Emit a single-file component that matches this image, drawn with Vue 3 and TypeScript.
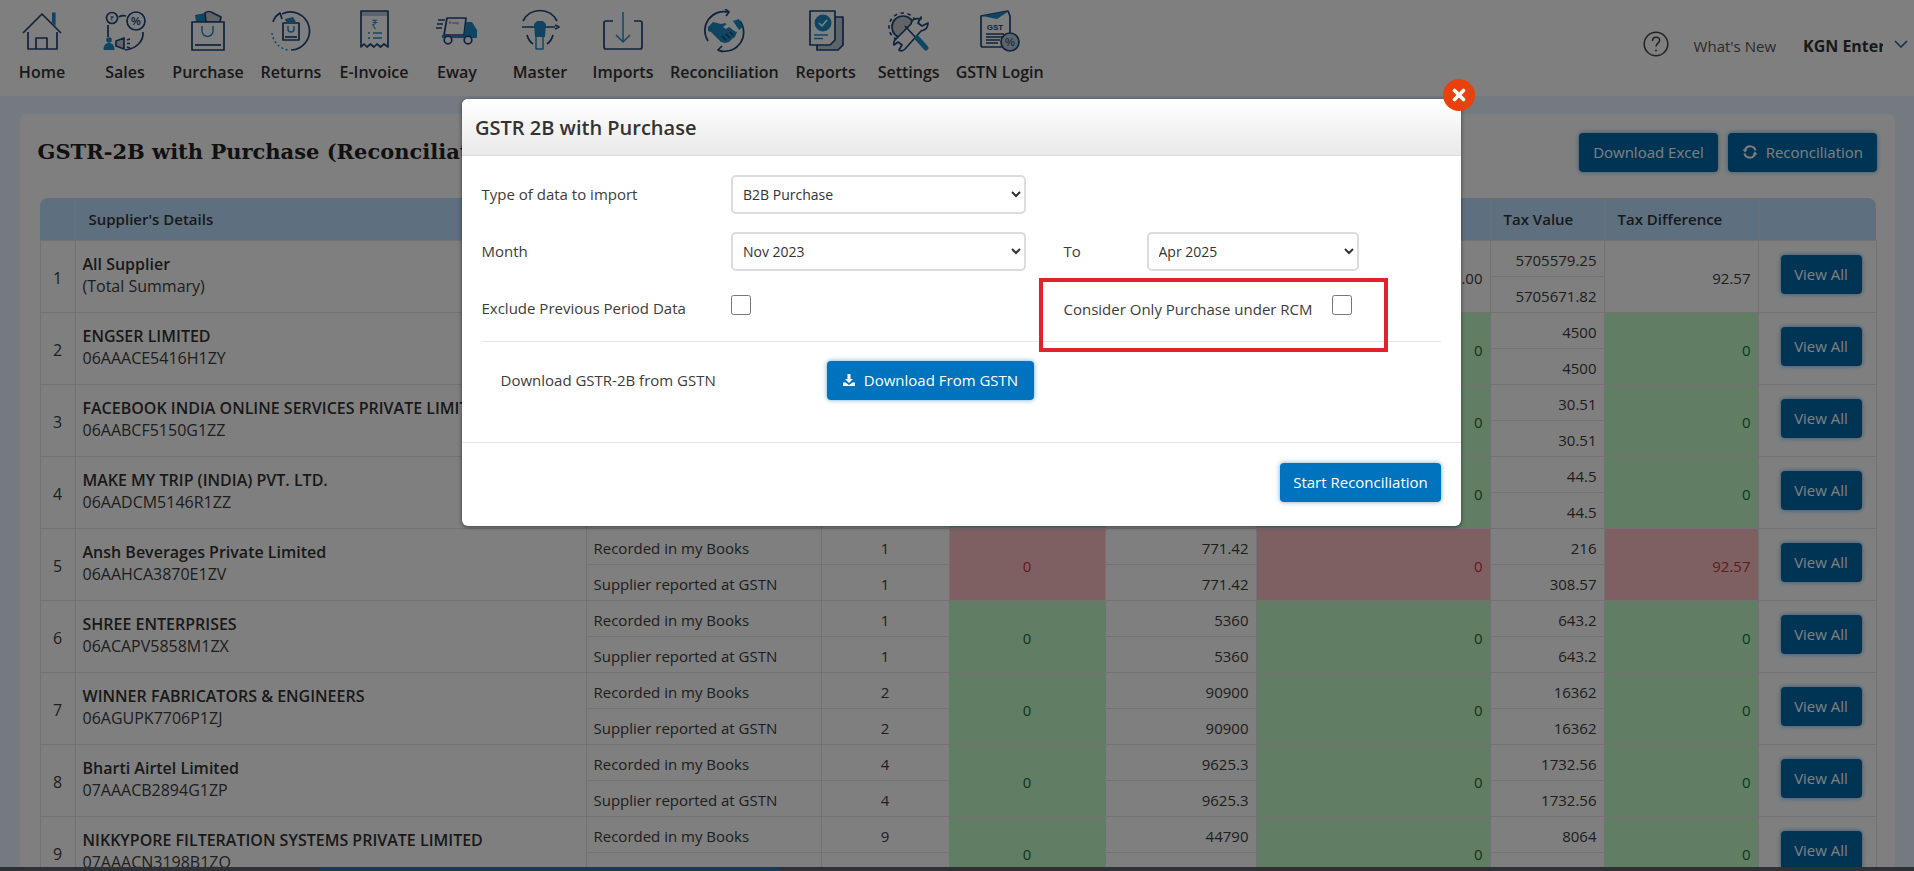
<template>
  <div class="page">
    <header class="topbar">
      <nav class="nav">
        <a v-for="item in navItems" :key="item.key" class="nav-item">
          <svg class="nav-icon" viewBox="0 0 48 44" width="48" height="44">
            <template v-if="item.key === 'home'">
              <path class="navy" stroke-width="3.600" d="M5 24 24 5l19 19" />
              <path class="blue" d="M34 3.500h3.600V17L34 13.500z" />
              <path class="navy" d="M10 23v17h29V23M18 40V29h11v11" />
            </template>
            <template v-else-if="item.key === 'sales'">
              <circle class="navy" cx="11" cy="9" r="5.500" />
              <text x="11" y="11.600" class="tiny" font-size="7">₹</text>
              <circle class="navy" stroke-width="2" cx="35" cy="12" r="9" />
              <text x="35" y="16" class="tiny bold" font-size="11">%</text>
              <path class="navy" d="M18 8q3-2 7-1M7 16v12M42 23c1 9-7 17-18 18" />
              <circle class="blue" cx="8" cy="31" r="2.800" />
              <path class="blue" d="M2.500 41c0-6 3-7 5.500-7s5.500 1 5.500 7z" />
              <path class="grey navy" d="M15 32l8-3v11l-8-3z" />
              <path class="navy" d="M26 31l3-1M26 34.500h3M26 38l3 1" />
            </template>
            <template v-else-if="item.key === 'purchase'">
              <path class="blue" d="M11 6l10-2 2 9H12z" />
              <path class="grey navy" d="M21 4q4-3 8 0l4 2 4 2-1 5H22z" />
              <path class="paper navy" d="M8 13h32v28H8z" />
              <path class="light" d="M18 17v5a5.500 5.500 0 0 0 11 0v-5" />
              <path class="navy" stroke-width="2.400" d="M11 36h26" />
            </template>
            <template v-else-if="item.key === 'returns'">
              <path class="navy" d="M15 5a19 19 0 1 1 9 36" />
              <path class="light" stroke-dasharray="2 2.500" d="M5 24a19 19 0 0 0 16 17" />
              <path class="navy" d="M8 8l5-4 2 6M13 4q-5 3-7 9" />
              <path class="blue" d="M18 10l8-2 3 5H19z" />
              <path class="paper navy" d="M16 14h16v17H16z" />
              <path class="light" d="M21 17v3a3 3 0 0 0 6 0v-3" />
              <path class="navy" d="M18 28h12" />
            </template>
            <template v-else-if="item.key === 'einvoice'">
              <path class="band" d="M11 2h27v5H11z" />
              <path class="navy" d="M11 38V2h27v36l-4-3-3.500 3-3.500-3-3 3-3.500-3-3.500 3-3-3z" />
              <text x="24.500" y="20" class="tiny light-text" font-size="13">₹</text>
              <path class="light" stroke-width="1.800" d="M18 24h2M23 24h9M18 29h2M23 29h9" />
            </template>
            <template v-else-if="item.key === 'eway'">
              <path class="paper navy" d="M14 9h19l-2 17H11z" />
              <text x="16" y="15" class="plain" font-size="3.500">E-way</text>
              <path class="navy" d="M5 11h7M4 15h6M3 19h6" />
              <path class="blue" d="M33 13h6l5 8v8H31z" />
              <path class="blue" d="M9 26h24v3H9z" />
              <circle class="paper navy" stroke-width="2.200" cx="15" cy="31" r="3.800" />
              <circle class="paper navy" stroke-width="2.200" cx="35" cy="31" r="3.800" />
            </template>
            <template v-else-if="item.key === 'master'">
              <path class="navy" d="M7 12a19 19 0 0 1 34 0M11 26a16 16 0 0 0 6 9M37 26a16 16 0 0 1-6 9" />
              <path class="navy" stroke-width="2.600" d="M6 18h33" />
              <path class="navy" d="M39 16l4 2-4 2" />
              <path class="blue" d="M18 15l3-3h6l3 3-1 13H19z" />
              <path class="light" d="M20 28v12h7V28" />
            </template>
            <template v-else-if="item.key === 'imports'">
              <path class="navy" stroke-width="1.800" d="M14 12H7a2 2 0 0 0-2 2v24a2 2 0 0 0 2 2h34a2 2 0 0 0 2-2V14a2 2 0 0 0-2-2h-6" />
              <path class="light" stroke-width="1.800" d="M24 3v30M17 26l7 7 7-7" />
            </template>
            <template v-else-if="item.key === 'recon'">
              <path class="navy" stroke-width="1.400" d="M8 32a19 19 0 0 1 20-29M40 12a19 19 0 0 1-22 29" />
              <path class="navy" stroke-width="1.400" d="M25 0l4 3-3 4M22 37l-4 4 5 2" />
              <path class="blue" d="M8 18l5-5 8 2 4-1 12 9-2 5-3 2-3 3-4 1-4-1-10-10-3-1z" />
              <path class="paper" d="M23 18l5-4 4 0 6 7-2 2-7-5-3 2z" />
              <path class="blue" d="M33 12l6-2 4 8-4 3z" />
              <path class="navy" stroke-width="1" d="M22 27l4 4M26 25l4 4M30 23l3 3" />
            </template>
            <template v-else-if="item.key === 'reports'">
              <path class="band navy" d="M19 8h22v28l-5 5H15V20z" />
              <path class="paper navy" d="M8 2h25v29l-5 5H8z" />
              <circle class="blue" cx="21" cy="14" r="8.500" />
              <path class="check" d="M17 14l3 3 5-6" />
              <path class="light" d="M12 26h14M12 29.500h9" />
            </template>
            <template v-else-if="item.key === 'settings'">
              <circle class="navy" stroke-width="4" stroke-dasharray="3.500 3.500" cx="18" cy="18" r="14" />
              <circle class="grey navy" cx="18" cy="18" r="11" />
              <path class="paper navy" stroke-width="1.500" d="M36 8l-3 6 4 3 6-3q0 7-7 8L20 40q-3 3-6 1l3-5-4-3-4 3q-1-4 2-6l15-15q1-7 10-5z" />
              <path class="navy" stroke-width="2.200" d="M20 17l12 13" />
              <path class="blue-line" stroke-width="5" d="M32 29l9 10" />
            </template>
            <template v-else>
              <path class="paper navy" d="M5 7l27-5 2 5v31H7a2 2 0 0 1-2-2z" />
              <path class="blue" d="M6 7l27-5-12 8z" />
              <text x="19" y="21" class="plain bold" font-size="8">GST</text>
              <path class="navy" d="M10 25h18M10 28h18M10 31h14M10 34h12" />
              <circle class="band navy" stroke-width="1.500" cx="34" cy="33" r="9" />
              <text x="34" y="37" class="tiny" font-size="11">%</text>
            </template>
          </svg>
          <span class="nav-label">{{ item.label }}</span>
        </a>
      </nav>

      <div class="account">
        <svg class="help" viewBox="0 0 26 26" width="26" height="26">
          <circle cx="13" cy="13" r="11.800" />
          <path d="M9.500 10c0-2.300 1.600-3.700 3.600-3.700 2.100 0 3.500 1.300 3.500 3 0 2.700-3.600 3-3.600 6.200" />
          <circle class="dot" cx="13" cy="19.500" r="1" />
        </svg>
        <span class="whats-new">What's New</span>
        <span class="company">KGN Enterprises</span>
        <svg class="chevron" viewBox="0 0 14 8" width="14" height="8"><path d="M1 1l6 6 6-6" /></svg>
      </div>
    </header>

    <main class="content">
      <section class="card">
        <div class="card-head">
          <h1>GSTR-2B with Purchase (Reconciliation)</h1>
          <div class="card-actions">
            <button class="btn">Download Excel</button>
            <button class="btn">
              <svg viewBox="0 0 16 16" width="16" height="16" class="sync">
                <path d="M13.500 6.500A5.500 5.500 0 0 0 3 6M2.500 9.500A5.500 5.500 0 0 0 13 10" />
                <path class="sync-head" d="M0.500 5.500h5L3 8.500zM15.500 10.500h-5l2.500-3z" />
              </svg>
              Reconciliation
            </button>
          </div>
        </div>

        <table class="grid">
          <colgroup>
            <col v-for="w in colWidths" :key="w.id" :style="{ width: w.px + 'px' }" />
          </colgroup>
          <thead>
            <tr>
              <th></th>
              <th>Supplier's Details</th>
              <th colspan="5"></th>
              <th>Tax Value</th>
              <th>Tax Difference</th>
              <th></th>
            </tr>
          </thead>
          <tbody>
            <template v-for="row in rows" :key="row.no">
              <tr>
                <td rowspan="2" class="no">{{ row.no }}</td>
                <td rowspan="2" class="supplier">
                  <strong>{{ row.name }}</strong>
                  <span>{{ row.gstin }}</span>
                </td>
                <td class="sub">Recorded in my Books</td>
                <td class="sub center">{{ row.count }}</td>
                <td rowspan="2" class="center" :class="row.tone">{{ row.diffs[0] }}</td>
                <td class="sub num">{{ row.value }}</td>
                <td rowspan="2" class="num" :class="row.tone">{{ row.diffs[1] }}</td>
                <td class="sub num">{{ row.tax[0] }}</td>
                <td rowspan="2" class="num" :class="row.tone">{{ row.diffs[2] }}</td>
                <td rowspan="2" class="action"><button class="btn view">View All</button></td>
              </tr>
              <tr>
                <td class="sub">Supplier reported at GSTN</td>
                <td class="sub center">{{ row.count }}</td>
                <td class="sub num">{{ row.value }}</td>
                <td class="sub num">{{ row.tax[1] }}</td>
              </tr>
            </template>
          </tbody>
        </table>
      </section>
    </main>

    <div class="taskbar"><span class="taskbar-mid"></span></div>

    <div class="overlay"></div>

    <div class="modal">
      <button class="modal-close" aria-label="Close">
        <svg viewBox="0 0 14 14" width="14" height="14"><path d="M2.500 2.500l9 9M11.500 2.500l-9 9" /></svg>
      </button>
      <div class="modal-head">GSTR 2B with Purchase</div>
      <div class="modal-body">
        <div class="form-grid">
          <label>Type of data to import</label>
          <select><option>B2B Purchase</option></select>
          <span></span><span></span><span></span>

          <label>Month</label>
          <select><option>Nov 2023</option></select>
          <span></span>
          <label>To</label>
          <select><option>Apr 2025</option></select>

          <label>Exclude Previous Period Data</label>
          <div><input type="checkbox" /></div>
          <span></span>
          <div class="rcm">
            <label>Consider Only Purchase under RCM</label>
            <input type="checkbox" />
          </div>
        </div>
        <div class="download-row">
          <label>Download GSTR-2B from GSTN</label>
          <button class="btn primary">
            <svg viewBox="0 0 14 14" width="14" height="14" class="dl">
              <path d="M5.500 1h3v5h2.500L7 10 3 6h2.500z" />
              <path d="M1 9.500h2.500L7 12l3.500-2.500H13V13H1z" />
            </svg>
            Download From GSTN
          </button>
        </div>
      </div>
      <div class="modal-foot">
        <button class="btn primary">Start Reconciliation</button>
      </div>
      <div class="highlight"></div>
    </div>
  </div>
</template>

<script setup lang="ts">
interface SupplierRow {
  no: number;
  name: string;
  gstin: string;
  count: string;
  value: string;
  tax: [string, string];
  diffs: [string, string, string];
  tone: string;
}

const navItems = [
  { key: 'home', label: 'Home' },
  { key: 'sales', label: 'Sales' },
  { key: 'purchase', label: 'Purchase' },
  { key: 'returns', label: 'Returns' },
  { key: 'einvoice', label: 'E-Invoice' },
  { key: 'eway', label: 'Eway' },
  { key: 'master', label: 'Master' },
  { key: 'imports', label: 'Imports' },
  { key: 'recon', label: 'Reconciliation' },
  { key: 'reports', label: 'Reports' },
  { key: 'settings', label: 'Settings' },
  { key: 'gstn', label: 'GSTN Login' },
];

const colWidths = [35, 511, 235, 128, 156, 151, 234, 114, 154, 118].map((px, id) => ({ id, px }));

const zeros: [string, string, string] = ['0', '0', '0'];

const rows: SupplierRow[] = [
  { no: 1, name: 'All Supplier', gstin: '(Total Summary)', count: '', value: '', tax: ['5705579.25', '5705671.82'], diffs: ['', '0.00', '92.57'], tone: '' },
  { no: 2, name: 'ENGSER LIMITED', gstin: '06AAACE5416H1ZY', count: '', value: '', tax: ['4500', '4500'], diffs: zeros, tone: 'ok' },
  { no: 3, name: 'FACEBOOK INDIA ONLINE SERVICES PRIVATE LIMITED', gstin: '06AABCF5150G1ZZ', count: '', value: '', tax: ['30.51', '30.51'], diffs: zeros, tone: 'ok' },
  { no: 4, name: 'MAKE MY TRIP (INDIA) PVT. LTD.', gstin: '06AADCM5146R1ZZ', count: '', value: '', tax: ['44.5', '44.5'], diffs: zeros, tone: 'ok' },
  { no: 5, name: 'Ansh Beverages Private Limited', gstin: '06AAHCA3870E1ZV', count: '1', value: '771.42', tax: ['216', '308.57'], diffs: ['0', '0', '92.57'], tone: 'bad' },
  { no: 6, name: 'SHREE ENTERPRISES', gstin: '06ACAPV5858M1ZX', count: '1', value: '5360', tax: ['643.2', '643.2'], diffs: zeros, tone: 'ok' },
  { no: 7, name: 'WINNER FABRICATORS & ENGINEERS', gstin: '06AGUPK7706P1ZJ', count: '2', value: '90900', tax: ['16362', '16362'], diffs: zeros, tone: 'ok' },
  { no: 8, name: 'Bharti Airtel Limited', gstin: '07AAACB2894G1ZP', count: '4', value: '9625.3', tax: ['1732.56', '1732.56'], diffs: zeros, tone: 'ok' },
  { no: 9, name: 'NIKKYPORE FILTERATION SYSTEMS PRIVATE LIMITED', gstin: '07AAACN3198B1ZQ', count: '9', value: '44790', tax: ['8064', '8064'], diffs: zeros, tone: 'ok' },
];
</script>

<style>
html,
body {
  margin: 0;
  overflow: hidden;
}
</style>

<style scoped>
.page {
  position: relative;
  display: flex;
  flex-direction: column;
  height: 871px;
  overflow: hidden;
  background: #e8f4ff;
  font-family: "Open Sans", "Liberation Sans", sans-serif;
  font-size: 15px;
  color: #3c3c3c;
}

/* Top menu */
.topbar {
  display: flex;
  flex: none;
  height: 96px;
  background: #fff;
}

.nav {
  display: flex;
  gap: 11px;
  padding: 9px 0 0 6px;
}

.nav-item {
  display: flex;
  flex-direction: column;
  align-items: center;
  min-width: 72px;
}

.nav-icon {
  margin-bottom: 9px;
}

.nav-label {
  font-size: 16px;
  font-weight: 600;
  line-height: 21px;
  color: #333;
  white-space: nowrap;
}

.nav-icon path,
.nav-icon circle {
  stroke-linejoin: round;
}

.navy {
  fill: none;
  stroke: #1e4678;
  stroke-width: 1.700;
}

.light {
  fill: none;
  stroke: #1f8fc9;
  stroke-width: 1.500;
}

.blue {
  fill: #1e8bc6;
  stroke: none;
}

.blue-line {
  fill: none;
  stroke: #1e8bc6;
  stroke-linecap: round;
}

.grey {
  fill: #c4c8cc;
}

.paper {
  fill: #fff;
}

.band {
  fill: #bcc8d8;
}

.check {
  fill: none;
  stroke: #fff;
  stroke-width: 1.600;
}

.tiny {
  fill: #1e4678;
  text-anchor: middle;
  font-family: "Liberation Sans", sans-serif;
}

.light-text {
  fill: #1f8fc9;
}

.plain {
  fill: #1e4678;
  font-family: "Liberation Sans", sans-serif;
}

.nav-icon text.plain.bold {
  text-anchor: middle;
}

.bold {
  font-weight: 700;
}

.account {
  display: flex;
  align-items: center;
  margin-left: auto;
  height: 92px;
  padding-right: 6px;
}

.help {
  margin: -5px 25px 0 0;
}

.help circle,
.help path {
  fill: none;
  stroke: #444;
  stroke-width: 1.500;
}

.help .dot {
  fill: #444;
  stroke: none;
}

.whats-new {
  margin-right: 27px;
  color: #555;
}

.company {
  width: 80px;
  overflow: hidden;
  white-space: nowrap;
  font-size: 16px;
  font-weight: 700;
  color: #333;
}

.chevron {
  margin: -4px 0 0 11px;
}

.chevron path {
  fill: none;
  stroke: #1e5e92;
  stroke-width: 1.500;
}

/* Page body */
.content {
  flex: 1;
  min-height: 0;
  padding: 18px 19px 0 20px;
  overflow: hidden;
}

.card {
  padding: 0 18px 0 19.500px;
  height: 100%;
  background: #fff;
  border-radius: 6px 6px 0 0;
}

.card-head {
  display: flex;
  justify-content: space-between;
  height: 84px;
  padding-top: 19px;
  box-sizing: border-box;
}

.card-head h1 {
  margin: 6px 0 0 -2px;
  font-family: "DejaVu Serif", "Liberation Serif", serif;
  font-size: 21px;
  font-weight: 700;
  line-height: 26px;
  color: #222;
  white-space: nowrap;
}

.card-actions {
  display: flex;
  gap: 10px;
}

.btn {
  display: inline-flex;
  align-items: center;
  justify-content: center;
  gap: 8px;
  height: 39px;
  padding: 0 14px 1px;
  border: 0;
  border-radius: 4px;
  background: #0068a8;
  box-shadow: 0 0 5px rgba(0, 115, 190, 0.6);
  font-family: inherit;
  font-size: 15px;
  color: #fff;
  white-space: nowrap;
}

.sync path {
  fill: none;
  stroke: #fff;
  stroke-width: 2;
}

.sync .sync-head {
  fill: #fff;
  stroke: none;
}

/* Table */
.grid {
  width: 1836px;
  table-layout: fixed;
  border-collapse: collapse;
}

.grid th {
  height: 42px;
  padding: 0 0 0 13px;
  background: #bcdfff;
  border-right: 1px solid #d0e4f5;
  font-size: 15px;
  font-weight: 600;
  text-align: left;
  color: #333;
}

.grid th:first-child {
  border-top-left-radius: 8px;
}

.grid th:last-child {
  border-top-right-radius: 8px;
  border-right: 0;
}

.grid td {
  height: 36px;
  box-sizing: border-box;
  padding: 2px 7px 0;
  border: 1px solid #e4e4e4;
  line-height: 22px;
}

.no {
  text-align: center;
  font-size: 16px;
}

.supplier {
  font-size: 16px;
}

.supplier strong,
.supplier span {
  display: block;
  white-space: nowrap;
}

.grid .supplier {
  padding-bottom: 5px;
}

.supplier strong {
  font-weight: 600;
  color: #333;
}

.center {
  text-align: center;
}

.num {
  text-align: right;
}

.ok {
  background: #c2fcca;
  color: #1a6e30;
}

.bad {
  background: #ffc0c4;
  color: #c8323c;
}

.grid .action {
  padding: 0 0 5px 8px;
  text-align: center;
  vertical-align: middle;
}

.btn.view {
  width: 81px;
  padding: 0 0 1px;
}

/* Windows taskbar peeking in at the bottom */
.taskbar {
  position: relative;
  z-index: 3;
  flex: none;
  height: 4px;
  background: #2e3236;
}

.taskbar-mid {
  display: block;
  width: 460px;
  height: 100%;
  margin-left: 320px;
  background: #1d3a55;
}

/* Modal */
.overlay {
  position: absolute;
  inset: 0;
  z-index: 1;
  background: rgba(0, 0, 0, 0.5);
}

.modal {
  position: absolute;
  top: 99px;
  left: 462px;
  z-index: 2;
  width: 998.500px;
  background: #fff;
  border-radius: 6px;
  box-shadow: 0 1px 4px rgba(0, 0, 0, 0.5);
}

.modal-close {
  position: absolute;
  top: -20px;
  right: -14.500px;
  display: flex;
  align-items: center;
  justify-content: center;
  width: 32px;
  height: 32px;
  padding: 0;
  border: 0;
  border-radius: 50%;
  background: #e8410e;
}

.modal-close path {
  fill: none;
  stroke: #fff;
  stroke-width: 3.600;
  stroke-linecap: round;
}

.modal-head {
  height: 57px;
  box-sizing: border-box;
  padding-left: 13px;
  border-bottom: 1px solid #dcdcdc;
  border-radius: 6px 6px 0 0;
  background: linear-gradient(#fff, #e9e9e9);
  font-size: 20px;
  font-weight: 600;
  line-height: 58px;
  color: #333;
}

.modal-body {
  padding: 19px 19.500px 0;
  height: 287px;
  box-sizing: border-box;
  border-bottom: 1px solid #e6e6e6;
  color: #3c3c3c;
}

.form-grid {
  display: grid;
  grid-template-columns: 249.500px 294.500px 38px 83px 212px;
  grid-template-rows: 39px 39px 40px;
  align-items: center;
  row-gap: 18px;
  height: 166px;
  border-bottom: 1px solid #e6e6e6;
}

.form-grid > label {
  margin-top: -2px;
}

select {
  width: 100%;
  height: 39px;
  box-sizing: border-box;
  padding: 0 6px;
  border: 2px solid #dcdcdc;
  border-radius: 5px;
  background: #fff;
  font-family: inherit;
  font-size: 14px;
  color: #333;
}

input[type='checkbox'] {
  display: block;
  width: 20px;
  height: 20px;
  margin: -8px 0 0;
}

.rcm {
  display: flex;
  grid-column: 4 / 6;
  grid-row: 3;
  gap: 19px;
  align-items: center;
  white-space: nowrap;
}

.download-row {
  display: flex;
  align-items: center;
  padding: 19px 0 0 19px;
}

.download-row label {
  width: 326px;
  margin-top: -2px;
}

.btn.primary {
  width: 207px;
  padding: 0 0 2px;
  background: #0073be;
  font-weight: 500;
}

.dl {
  fill: #fff;
}

.modal-foot {
  display: flex;
  justify-content: flex-end;
  height: 83px;
  padding: 20px 19.500px 0 0;
  box-sizing: border-box;
}

.modal-foot .btn.primary {
  width: 161px;
}

/* Annotation box drawn on the screenshot */
.highlight {
  position: absolute;
  top: 179px;
  left: 577px;
  width: 349px;
  height: 74px;
  box-sizing: border-box;
  border: 4px solid #e3202c;
}
</style>
